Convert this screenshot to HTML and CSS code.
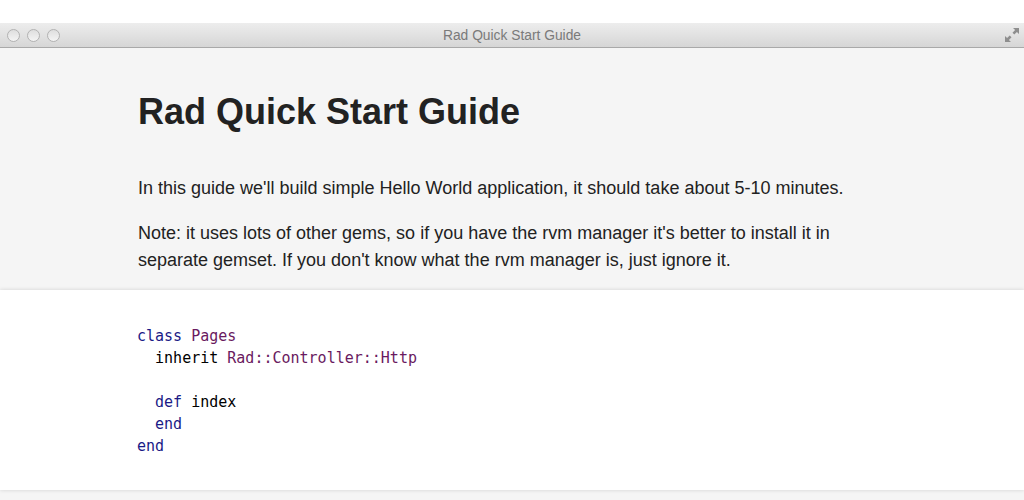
FILE: index.html
```html
<!DOCTYPE html>
<html>
<head>
<meta charset="utf-8">
<link rel="stylesheet" href="styles.css">
</head>
<body>
<div class="top"></div>
<div class="titlebar">
  <div class="lights"><span class="light"></span><span class="light"></span><span class="light"></span></div>
  <div class="wtitle">Rad Quick Start Guide</div>
  <svg class="resize" width="16" height="16" viewBox="0 0 16 16">
    <path d="M9 1h6v6l-2.1-2.1-2.6 2.6-1.8-1.8 2.6-2.6z" fill="#8e8e8e"/>
    <path d="M7 15H1V9l2.1 2.1 2.6-2.6 1.8 1.8-2.6 2.6z" fill="#8e8e8e"/>
  </svg>
</div>
<div class="content">
  <div class="intro">
    <h1 class="heading">Rad Quick Start Guide</h1>
    <p class="para">In this guide we'll build simple Hello World application, it should take about 5-10 minutes.</p>
    <p class="para">Note: it uses lots of other gems, so if you have the rvm manager it's better to install it in separate gemset. If you don't know what the rvm manager is, just ignore it.</p>
  </div>
  <div class="codeblock">
<pre class="code"><span class="kw">class</span> <span class="const">Pages</span>
  <span class="id">inherit</span> <span class="const">Rad::Controller::Http</span>

  <span class="kw">def</span> <span class="id">index</span>
  <span class="kw">end</span>
<span class="kw">end</span></pre>
  </div>
</div>
</body>
</html>
```
FILE: styles.css
```css
html, body { margin: 0; padding: 0; }
body { background: #fff; width: 1024px; height: 500px; overflow: hidden; font-family: "Liberation Sans", Arial, sans-serif; }
.top { height: 23px; background: #fff; }
.titlebar {
  height: 25px;
  background: linear-gradient(#ededed, #d6d6d6);
  border-bottom: 1px solid #a9a9a9;
  display: flex;
  align-items: center;
  position: relative;
  box-sizing: border-box;
}
.lights { display: flex; gap: 7px; padding-left: 7px; }
.light {
  width: 11px; height: 11px; border-radius: 50%;
  border: 1px solid #b2b2b2;
  background: linear-gradient(#dedede, #f4f4f4);
}
.wtitle {
  position: absolute; left: 0; right: 0; top: 0; bottom: 0;
  display: flex; align-items: center; justify-content: center;
  font-family: "Liberation Sans", Arial, sans-serif;
  font-size: 13.8px; color: #7a7a7a;
}
.resize { margin-left: auto; margin-right: 4px; position: relative; }
.content { background: #f5f5f5; height: 452px; }
.intro { padding: 42px 0 0 138px; width: 730px; height: 200px; box-sizing: content-box; }
.heading {
  margin: 0; font-size: 36px; font-weight: bold; color: #222;
  line-height: 44px;
}
.para {
  margin: 41px 0 0; font-size: 18px; line-height: 27px; color: #222;
}
.para + .para { margin-top: 18px; }
.codeblock {
  background: #fff; height: 200px; box-sizing: border-box;
  padding: 35px 0 0 137px;
  box-shadow: 0 0 4px rgba(0,0,0,0.15);
}
.code {
  margin: 0; font-family: "DejaVu Sans Mono", monospace; font-size: 15px; line-height: 22px; color: #111;
}
.kw { color: #1a1a86; }
.const { color: #6a1a60; }
.id { color: #000; }
```
